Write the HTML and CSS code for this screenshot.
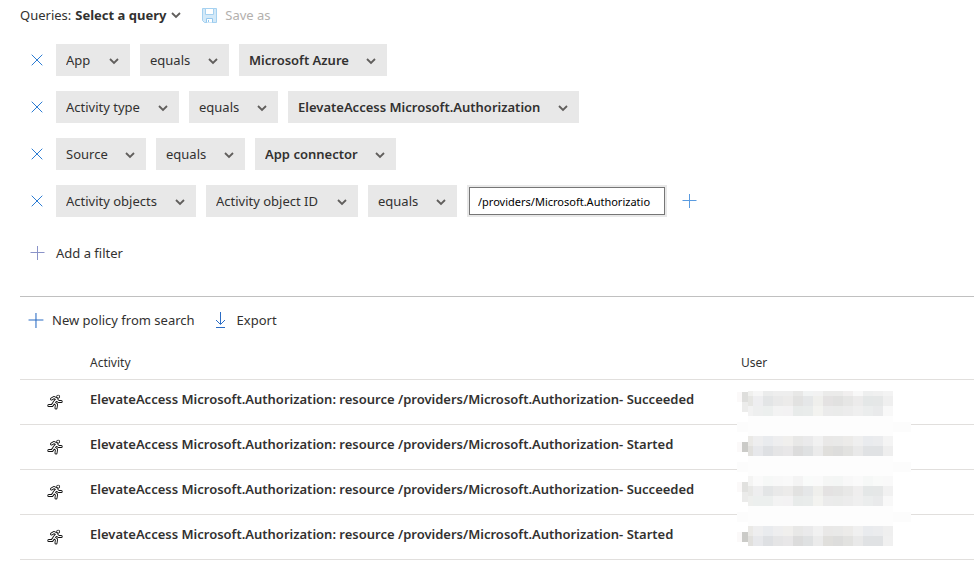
FILE: index.html
```
<!DOCTYPE html>
<html lang="en">
<head>
  <meta charset="UTF-8">
  <meta name="viewport" content="width=device-width, initial-scale=1.0">
  <title>Activity log</title>
  <link rel="stylesheet" href="styles.css">
</head>
<body>
  <!-- shared icons -->
  <svg class="sprite" aria-hidden="true">
    <symbol id="chevron" viewBox="0 0 12 12"><path d="M2 4l4 4 4-4" fill="none" stroke="currentColor" stroke-width="1.800"/></symbol>
    <symbol id="close" viewBox="0 0 12 12"><path d="M.7.7l10.600 10.600M11.300.7L.7 11.300" fill="none" stroke="currentColor"/></symbol>
    <symbol id="plus" viewBox="0 0 16 16"><path d="M7.500 1v14M.5 7.500h14" fill="none" stroke="currentColor"/></symbol>
    <symbol id="runner" viewBox="0 0 16 16">
      <g fill="none" stroke-linecap="round" stroke-linejoin="round">
        <g stroke="#111" stroke-width="3">
          <path d="M4.500 5L7 3.500l3 1.500-3 3.500 2.500 2L9 14M6.500 9.500L5 11.500H1.800M9.500 5.500l2 2h2.700"/>
          <circle cx="11.200" cy="2.600" r=".4"/>
        </g>
        <g stroke="#fff" stroke-width="1.200">
          <path d="M4.500 5L7 3.500l3 1.500-3 3.500 2.500 2L9 14M6.500 9.500L5 11.500H1.800M9.500 5.500l2 2h2.700"/>
          <circle cx="11.200" cy="2.600" r=".2"/>
        </g>
      </g>
    </symbol>
  </svg>

  <main class="page">
    <div class="queries">
      <label for="query">Queries:</label>
      <span class="dropdown query">
        <select id="query"><option>Select a query</option></select>
        <svg class="chevron"><use href="#chevron"/></svg>
      </span>
      <button class="save" type="button" disabled>
        <svg viewBox="0 0 15 15">
          <path d="M.5.5h14v14h-12l-2-2z" fill="#d3e9f8" stroke="#a5d1f0"/>
          <path d="M3.500.5h8v6h-8z" fill="#fff" stroke="#a5d1f0"/>
          <path d="M4.500 14.500v-4h6v4" fill="#fff" stroke="#92c7ee"/>
          <path d="M6.500 12v2" stroke="#92c7ee"/>
        </svg>
        Save as
      </button>
    </div>

    <form class="filters">
      <div class="filter">
        <button class="remove" type="button" aria-label="Remove filter"><svg><use href="#close"/></svg></button>
        <span class="dropdown field"><select aria-label="Field"><option>App</option></select><svg class="chevron"><use href="#chevron"/></svg></span>
        <span class="dropdown"><select aria-label="Operator"><option>equals</option></select><svg class="chevron"><use href="#chevron"/></svg></span>
        <span class="dropdown value"><select aria-label="Value"><option>Microsoft Azure</option></select><svg class="chevron"><use href="#chevron"/></svg></span>
      </div>
      <div class="filter">
        <button class="remove" type="button" aria-label="Remove filter"><svg><use href="#close"/></svg></button>
        <span class="dropdown field"><select aria-label="Field"><option>Activity type</option></select><svg class="chevron"><use href="#chevron"/></svg></span>
        <span class="dropdown"><select aria-label="Operator"><option>equals</option></select><svg class="chevron"><use href="#chevron"/></svg></span>
        <span class="dropdown value"><select aria-label="Value"><option>ElevateAccess Microsoft.Authorization</option></select><svg class="chevron"><use href="#chevron"/></svg></span>
      </div>
      <div class="filter">
        <button class="remove" type="button" aria-label="Remove filter"><svg><use href="#close"/></svg></button>
        <span class="dropdown"><select aria-label="Field"><option>Source</option></select><svg class="chevron"><use href="#chevron"/></svg></span>
        <span class="dropdown"><select aria-label="Operator"><option>equals</option></select><svg class="chevron"><use href="#chevron"/></svg></span>
        <span class="dropdown value"><select aria-label="Value"><option>App connector</option></select><svg class="chevron"><use href="#chevron"/></svg></span>
      </div>
      <div class="filter">
        <button class="remove" type="button" aria-label="Remove filter"><svg><use href="#close"/></svg></button>
        <span class="dropdown field"><select aria-label="Field"><option>Activity objects</option></select><svg class="chevron"><use href="#chevron"/></svg></span>
        <span class="dropdown field"><select aria-label="Object field"><option>Activity object ID</option></select><svg class="chevron"><use href="#chevron"/></svg></span>
        <span class="dropdown"><select aria-label="Operator"><option>equals</option></select><svg class="chevron"><use href="#chevron"/></svg></span>
        <span class="textbox"><input type="text" aria-label="Object ID" value="/providers/Microsoft.Authorizatio"></span>
        <button class="add-value" type="button" aria-label="Add value"><svg><use href="#plus"/></svg></button>
      </div>
      <button class="add-filter" type="button"><svg><use href="#plus"/></svg>Add a filter</button>
    </form>

    <div class="toolbar">
      <button type="button"><svg class="plus"><use href="#plus"/></svg>New policy from search</button>
      <button type="button" class="export">
        <svg viewBox="0 0 12 16"><path d="M5.500 0v12M1 8l4.500 4.500L10 8M1 15.500h9" fill="none" stroke="currentColor"/></svg>
        Export
      </button>
    </div>

    <table class="activities">
      <thead>
        <tr><th class="icon"></th><th class="activity">Activity</th><th>User</th></tr>
      </thead>
      <tbody>
        <tr>
          <td class="icon"><svg><use href="#runner"/></svg></td>
          <td>ElevateAccess Microsoft.Authorization: resource /providers/Microsoft.Authorization- Succeeded</td>
          <td class="user"><svg class="mosaic" id="mosaic" width="174" height="155" aria-label="Hidden user names"></svg></td>
        </tr>
        <tr>
          <td class="icon"><svg><use href="#runner"/></svg></td>
          <td>ElevateAccess Microsoft.Authorization: resource /providers/Microsoft.Authorization- Started</td>
          <td></td>
        </tr>
        <tr>
          <td class="icon"><svg><use href="#runner"/></svg></td>
          <td>ElevateAccess Microsoft.Authorization: resource /providers/Microsoft.Authorization- Succeeded</td>
          <td></td>
        </tr>
        <tr>
          <td class="icon"><svg><use href="#runner"/></svg></td>
          <td>ElevateAccess Microsoft.Authorization: resource /providers/Microsoft.Authorization- Started</td>
          <td></td>
        </tr>
      </tbody>
    </table>
  </main>
  <script src="script.js"></script>
</body>
</html>
```
FILE: styles.css
```
body {
  margin: 0;
  background: #fff;
  color: #323130;
  font-family: "Noto Sans", "Open Sans", sans-serif;
  font-size: 13px;
  line-height: 20px;
}
.sprite {
  position: absolute;
  width: 0;
  height: 0;
}
.page {
  padding: 5px 0 0 20px;
}
button,
select,
input {
  font: inherit;
  color: inherit;
  margin: 0;
}
button {
  display: flex;
  align-items: center;
  padding: 0;
  border: none;
  background: none;
  cursor: pointer;
}
svg {
  display: block;
  flex: none;
}

/* query bar */
.queries {
  display: flex;
  align-items: center;
  height: 20px;
}
.dropdown {
  position: relative;
  display: block;
}
.dropdown select {
  display: block;
  appearance: none;
  height: 32px;
  padding: 0 38px 0 10px;
  border: none;
  border-radius: 0;
  background: #e8e8e8;
}
.dropdown .chevron {
  position: absolute;
  top: 11px;
  right: 10px;
  width: 12px;
  height: 12px;
  color: #605e5c;
  pointer-events: none;
}
.query select {
  height: 20px;
  padding: 0 18px 0 4px;
  background: none;
  font-weight: 700;
}
.query .chevron {
  top: 4px;
  right: 3px;
}
.save {
  gap: 8px;
  margin-left: 17px;
  color: #b3b0ad;
}
.save svg {
  width: 15px;
  height: 15px;
}

/* filters */
.filters {
  display: flex;
  flex-direction: column;
  gap: 15px;
  padding: 19px 0 33px;
  border-bottom: 1px solid #c0c0c0;
}
.filter {
  display: flex;
  align-items: center;
  gap: 10px;
}
.field select {
  padding-right: 39px;
}
.value select {
  font-weight: 600;
}
.remove {
  justify-content: center;
  width: 26px;
  padding-left: 8px;
  height: 32px;
  color: #2b7cd3;
}
.remove svg {
  width: 12px;
  height: 12px;
}
.textbox {
  padding: 2px;
  background: #e8e8e8;
}
.textbox input {
  display: block;
  box-sizing: border-box;
  width: 196px;
  height: 28px;
  padding: 0 8px;
  border: 1px solid #767676;
  background: #fff;
  color: #000;
  font-size: 11px;
}
.add-value {
  padding-left: 5px;
  color: #5a9be0;
}
.add-value svg,
.add-filter svg {
  width: 16px;
  height: 16px;
}
.add-filter {
  gap: 10px;
  margin-top: 11px;
  padding-left: 10px;
}
.add-filter svg {
  color: #8a93c8;
}

/* actions over the table */
.toolbar {
  display: flex;
  gap: 20px;
  padding: 13px 0 0 8px;
}
.toolbar button {
  gap: 7px;
}
.toolbar svg {
  color: #2b6cc4;
  width: 12px;
  height: 16px;
}
.toolbar .plus {
  width: 17px;
  height: 17px;
}
.toolbar .export {
  gap: 10px;
}

/* results */
.activities {
  width: 100%;
  margin-top: 14px;
  border-collapse: separate;
  border-spacing: 0;
  table-layout: fixed;
}
.activities th,
.activities td {
  box-sizing: border-box;
  padding: 0;
  border-bottom: 1px solid #e1dfdd;
  text-align: left;
  font-weight: 600;
}
.activities th {
  height: 36px;
  padding-top: 2px;
  font-size: 12px;
  font-weight: 400;
}
.activities td {
  height: 45px;
  padding-bottom: 6px;
  white-space: nowrap;
}
.activities .icon {
  width: 70px;
}
.activities .activity {
  width: 651px;
}
td.icon svg {
  width: 16px;
  height: 16px;
  margin: 6px 0 0 27px;
}
.user {
  position: relative;
}
.mosaic {
  position: absolute;
  top: 11px;
  left: -4px;
}
```
FILE: script.js
```
// blocks that hide the user names, on a 10px grid
const bands = [
  { y: 0, h: 5, c: ['f0f0ee', 'f6f6f6', 'ebecec', 'eeeeee', 'eeeeee', 'e8e8e7', 'f1f3f3', 'f2f2f2', 'ebebea', 'ebebea', 'f1efef', 'f8f8f8', 'eeefef', 'f0f0f0', 'f3f3f3'] },
  { y: 5, h: 10, c: ['e6e6e3', 'eeeef0', 'e3e5e6', 'e9e9e9', 'ecebea', 'e2e2e1', 'e5e7e8', 'efefec', 'e4e2e2', 'e1e1e0', 'e6e6e5', 'ecebeb', 'e4e7e7', 'e5e7e7', 'efefef'] },
  { y: 15, h: 10, c: ['f2f2f2', 'eeefef', 'ecefee', 'f3f3f3', 'f3f2f3', 'e8ebea', 'e9eceb', 'f3f3f0', 'ebebeb', 'eaebea', 'ececec', 'efefef', 'ebeded', 'e9eaeb', 'f8f8f8'] },
  { y: 45, h: 10, c: ['eae9e6', 'eeeeef', 'e9ebee', 'eeeeef', 'f0efed', 'e8e8e7', 'eaeaeb', 'f1f1f1', 'e9e8e7', 'e9e9e8', 'ecebe9', 'efefef', 'e9ebee', 'ebecee', 'f4f4f4'] },
  { y: 55, h: 10, c: ['e1e0dd', 'e7e8eb', 'dee0e3', 'e5e5e6', 'e8e7e8', 'dcdcdc', 'dfe1e2', 'ebebeb', 'e0dfdc', 'dddddc', 'e2e2e0', 'e9e9e9', 'e0e2e4', 'e0e2e4', 'eeeeee'] },
  { y: 85, h: 10, c: ['f4f4f3', 'fafafa', 'f6f8f7', 'f8f8f8', 'f9f9f9', 'f4f4f4', 'f9fbfa', 'fafafa', 'f5f6f5', 'f4f6f5', 'f8f8f8', 'fafafa', 'f6f8f7', 'f9faf9', 'f9f9f9'] },
  { y: 95, h: 10, c: ['e8e8e6', 'eeeeef', 'e3e5e6', 'e9e9e9', 'ecebea', 'e2e2e1', 'e5e7e8', 'efefec', 'e4e2e2', 'e4e4e3', 'e8e8e7', 'efeeee', 'e4e7e7', 'e5e7e7', 'f1f1f1'] },
  { y: 105, h: 10, c: ['eeefed', 'ecefee', 'ecefee', 'f3f3f3', 'f3f2f3', 'e8ebea', 'e9eceb', 'f3f3f0', 'ebebeb', 'eaebea', 'ececec', 'efefef', 'ebeded', 'e9eaeb', 'f8f8f8'] },
  { y: 135, h: 10, c: ['eae9e6', 'eeeeef', 'e9ebee', 'eeeeef', 'f0efed', 'e8e8e7', 'eaeaeb', 'f1f1f1', 'e9e8e7', 'e9e9e8', 'ecebe9', 'f0f0f0', 'e9ebee', 'ebecee', 'efefef'] },
  { y: 145, h: 10, c: ['e1e0dd', 'e7e8eb', 'dee0e3', 'e5e5e6', 'e8e7e8', 'dcdcdc', 'dfe1e2', 'ebebeb', 'e0dfdc', 'dddddc', 'e2e2e0', 'e9e9e9', 'e0e2e4', 'e0e2e4', 'f0f0f0'] }
];
const edges = [
  [5, 1, 6, 10, 'dededc'], [5, 11, 6, 10, 'ececeb'],
  [5, 51, 6, 10, 'cbcbc8'],
  [5, 91, 6, 10, 'e1e1df'], [5, 101, 6, 10, 'ebebea'],
  [5, 141, 6, 10, 'cbcbc8'],
  [0, 1, 5, 10, 'fbf9f9'], [0, 51, 5, 10, 'fbf9f9'], [0, 91, 5, 10, 'fbf9f9'], [0, 141, 5, 10, 'fbf9f9'],
  [0, 31, 174, 10, 'fcfcfc'], [0, 71, 174, 10, 'fcfcfc'], [0, 121, 174, 10, 'fcfcfc'],
  [11, 25, 145, 20, 'fdfdfd'], [11, 65, 145, 20, 'fdfdfd'], [11, 115, 145, 20, 'fdfdfd']
];

const mosaic = document.getElementById('mosaic');

function block(x, y, w, h, color) {
  const r = document.createElementNS('http://www.w3.org/2000/svg', 'rect');
  r.setAttribute('x', x);
  r.setAttribute('y', y);
  r.setAttribute('width', w);
  r.setAttribute('height', h);
  r.setAttribute('fill', '#' + color);
  mosaic.appendChild(r);
}

for (const e of edges) block(...e);
for (const band of bands) {
  band.c.forEach((color, i) => {
    const x = i === 0 ? 11 : 6 + i * 10;
    block(x, band.y, i === 0 ? 5 : 10, band.h, color);
  });
}
```
